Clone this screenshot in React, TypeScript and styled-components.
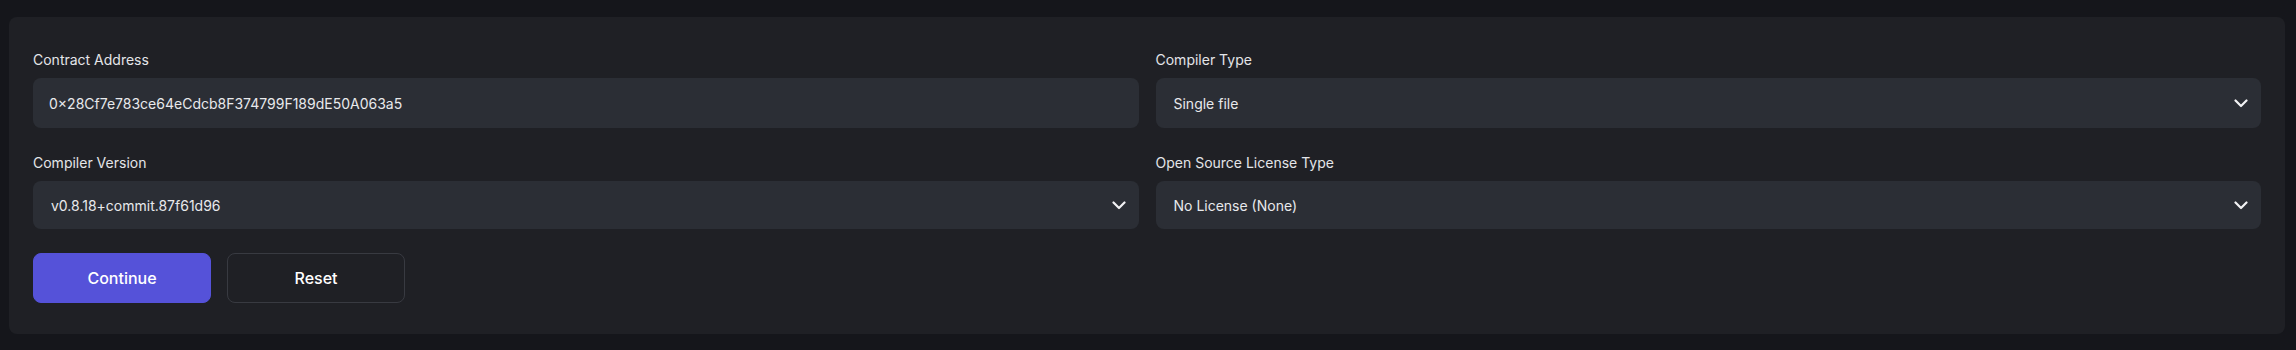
import React from "react";
import styled, { createGlobalStyle } from "styled-components";

const GlobalStyle = createGlobalStyle`
  html, body {
    margin: 0;
    padding: 0;
    background: #15161b;
    font-family: Inter, "Noto Sans", "Liberation Sans", sans-serif;
    -webkit-font-smoothing: antialiased;
  }
`;

const Page = styled.div`
  padding: 17px 11px 16px 9px;
  background: #15161b;
`;

const Card = styled.form`
  background: #1f2025;
  border-radius: 8px;
  padding: 33px 24px 31px;
  display: flex;
  flex-direction: column;
`;

const Grid = styled.div`
  display: grid;
  grid-template-columns: 1fr 1fr;
  column-gap: 17px;
  row-gap: 25px;
`;

const Field = styled.div`
  display: flex;
  flex-direction: column;
  min-width: 0;
`;

const Label = styled.label`
  font-size: 14px;
  line-height: 20px;
  color: #e4e5e9;
  margin-bottom: 8px;
`;

const TextInput = styled.div<{ $tall?: boolean }>`
  height: ${(p) => (p.$tall ? 50 : 48)}px;
  box-sizing: border-box;
  background: #2b2e35;
  border-radius: 8px;
  padding: 0 16px;
  display: flex;
  align-items: center;
  font-size: 14px;
  color: #e8e9ec;
`;

const SelectBox = styled.div<{ $tall?: boolean }>`
  height: ${(p) => (p.$tall ? 50 : 48)}px;
  box-sizing: border-box;
  background: #2b2e35;
  border-radius: 8px;
  padding: 0 13px 0 18px;
  display: flex;
  align-items: center;
  justify-content: space-between;
  font-size: 14px;
  color: #e8e9ec;
`;

const Actions = styled.div`
  display: flex;
  gap: 16px;
  margin-top: 24px;
`;

const Button = styled.button<{ $primary?: boolean }>`
  width: 178px;
  height: 50px;
  border-radius: 8px;
  font-family: inherit;
  font-size: 16px;
  font-weight: 500;
  color: #ffffff;
  cursor: pointer;
  background: ${(p) => (p.$primary ? "#5552d9" : "transparent")};
  border: 1px solid ${(p) => (p.$primary ? "#5552d9" : "#383a41")};
`;

const Chevron = () => (
  <svg width="14" height="9" viewBox="0 0 14 9" fill="none">
    <path d="M1.5 1.5 7 7l5.5-5.5" stroke="#f2f2f4" strokeWidth="2.2" strokeLinecap="round" strokeLinejoin="round" />
  </svg>
);

const Select = ({ value, tall }: { value: string; tall?: boolean }) => (
  <SelectBox $tall={tall}>
    <span>{value}</span>
    <Chevron />
  </SelectBox>
);

export default function App() {
  return (
    <Page>
      <GlobalStyle />
      <Card onSubmit={(e) => e.preventDefault()}>
        <Grid>
          <Field>
            <Label>Contract Address</Label>
            <TextInput $tall>0×28Cf7e783ce64eCdcb8F374799F189dE50A063a5</TextInput>
          </Field>
          <Field>
            <Label>Compiler Type</Label>
            <Select value="Single file" tall />
          </Field>
          <Field>
            <Label>Compiler Version</Label>
            <Select value="v0.8.18+commit.87f61d96" />
          </Field>
          <Field>
            <Label>Open Source License Type</Label>
            <Select value="No License (None)" />
          </Field>
        </Grid>
        <Actions>
          <Button $primary type="submit">Continue</Button>
          <Button type="button">Reset</Button>
        </Actions>
      </Card>
    </Page>
  );
}
